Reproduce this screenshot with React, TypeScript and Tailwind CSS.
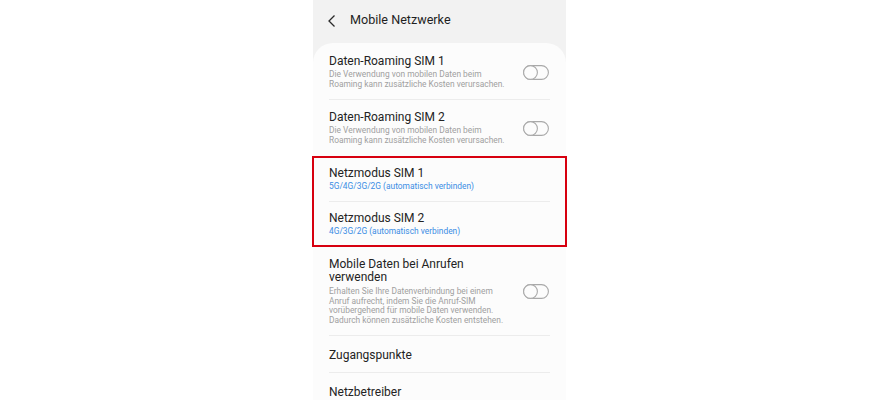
import React from "react";

type Row = {
  title: string[];
  desc?: string[];
  blue?: boolean;
  toggle?: boolean;
  cls: string;
  descCls?: string;
};

function Toggle() {
  return (
    <svg width="26" height="15" viewBox="0 0 26 15" className="shrink-0">
      <rect x="0.6" y="0.6" width="24.8" height="13.8" rx="6.9" fill="none" stroke="#a9a9a9" strokeWidth="1.1" />
      <circle cx="7.5" cy="7.5" r="6.9" fill="#fcfcfc" stroke="#a9a9a9" strokeWidth="1.1" />
    </svg>
  );
}

function Item({ row, first }: { row: Row; first?: boolean }) {
  return (
    <div className={`flex items-center justify-between ${first ? "" : "border-t border-[#ececec]"} ${row.cls}`}>
      <div className="flex flex-col">
        {row.title.map((t) => (
          <span key={t} className="text-[12px] leading-[13px] text-[#232323]">
            {t}
          </span>
        ))}
        {row.desc && (
          <div className={`flex flex-col ${row.descCls ?? "mt-[1px]"}`}>
            {row.desc.map((d) => (
              <span
                key={d}
                className={`text-[8.4px] leading-[10px] whitespace-nowrap ${row.blue ? "text-[#3b8de4]" : "text-[#a0a0a0]"}`}
              >
                {d}
              </span>
            ))}
          </div>
        )}
      </div>
      {row.toggle && <div className="mr-[1px]"><Toggle /></div>}
    </div>
  );
}

const roaming = (n: number, first?: boolean): Row => ({
  title: [`Daten-Roaming SIM ${n}`],
  desc: ["Die Verwendung von mobilen Daten beim", "Roaming kann zusätzliche Kosten verursachen."],
  toggle: true,
  cls: first ? "pt-[12px] pb-[10px]" : "pt-[11px] pb-[11px]",
});

export default function App() {
  return (
    <div className="flex h-[400px] w-full justify-center overflow-hidden bg-white" style={{ fontFamily: "Roboto, 'Noto Sans', sans-serif" }}>
      <div className="flex w-[253px] flex-col bg-[#f2f2f2]">
        <div className="flex h-[43px] shrink-0 items-center pb-[2px] pl-[14px]">
          <svg width="10" height="14" viewBox="0 0 10 14" className="mr-[13px]">
            <polyline points="7.5,1.5 2,7 7.5,12.5" fill="none" stroke="#2a2a2a" strokeWidth="1.3" />
          </svg>
          <span className="text-[12.6px] text-[#1f1f1f]">Mobile Netzwerke</span>
        </div>
        <div className="flex-1 rounded-t-[20px] bg-[#fcfcfc] px-4">
          <Item row={roaming(1, true)} first />
          <Item row={roaming(2)} />
          <div className="relative">
            <Item
              row={{
                title: ["Netzmodus SIM 1"],
                desc: ["5G/4G/3G/2G (automatisch verbinden)"],
                blue: true,
                cls: "pt-[10px] pb-[10px]",
              }}
            />
            <Item
              row={{
                title: ["Netzmodus SIM 2"],
                desc: ["4G/3G/2G (automatisch verbinden)"],
                blue: true,
                cls: "pt-[10px] pb-[10px]",
              }}
            />
            <div className="pointer-events-none absolute -right-[17px] -bottom-px -left-[17px] top-0 border-2 border-[#d7000f]" />
          </div>
          <Item
            row={{
              title: ["Mobile Daten bei Anrufen", "verwenden"],
              desc: [
                "Erhalten Sie Ihre Datenverbindung bei einem",
                "Anruf aufrecht, indem Sie die Anruf-SIM",
                "vorübergehend für mobile Daten verwenden.",
                "Dadurch können zusätzliche Kosten entstehen.",
              ],
              toggle: true,
              cls: "pt-[11px] pb-[10px]",
              descCls: "mt-[3px] [&>span]:leading-[9.6px]",
            }}
          />
          <Item row={{ title: ["Zugangspunkte"], cls: "pt-[13px] pb-[10px]" }} />
          <Item row={{ title: ["Netzbetreiber"], cls: "pt-[13px] pb-[10px]" }} />
        </div>
      </div>
    </div>
  );
}
